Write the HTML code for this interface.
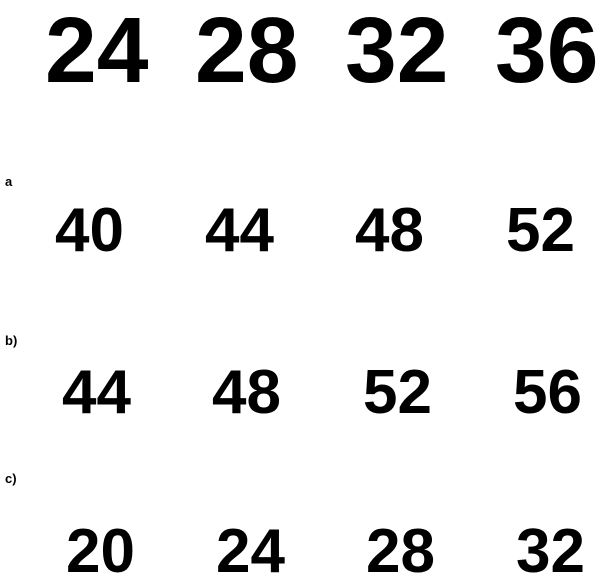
<!DOCTYPE html>
<html><head><meta charset="utf-8"><style>
html,body{margin:0;padding:0;width:609px;height:585px;background:#fff;overflow:hidden}
div{position:absolute;font-family:"Liberation Sans",Arial,sans-serif;font-weight:bold;line-height:1;color:#000;white-space:nowrap}
.t{font-size:93px}
.m{font-size:62px}
.l{font-size:13px}
</style></head><body>
<div class="t" style="left:45px;top:4px">24</div>
<div class="t" style="left:195px;top:4px">28</div>
<div class="t" style="left:345px;top:4px">32</div>
<div class="t" style="left:495px;top:4px">36</div>

<div class="l" style="left:5px;top:175px">a</div>
<div class="m" style="left:55px;top:200px">40</div>
<div class="m" style="left:205px;top:200px">44</div>
<div class="m" style="left:355px;top:200px">48</div>
<div class="m" style="left:506px;top:200px">52</div>

<div class="l" style="left:5px;top:334px">b)</div>
<div class="m" style="left:62px;top:362px">44</div>
<div class="m" style="left:212px;top:362px">48</div>
<div class="m" style="left:363px;top:362px">52</div>
<div class="m" style="left:513px;top:362px">56</div>

<div class="l" style="left:5px;top:472px">c)</div>
<div class="m" style="left:66px;top:521px">20</div>
<div class="m" style="left:216px;top:521px">24</div>
<div class="m" style="left:366px;top:521px">28</div>
<div class="m" style="left:516px;top:521px">32</div>
</body></html>
